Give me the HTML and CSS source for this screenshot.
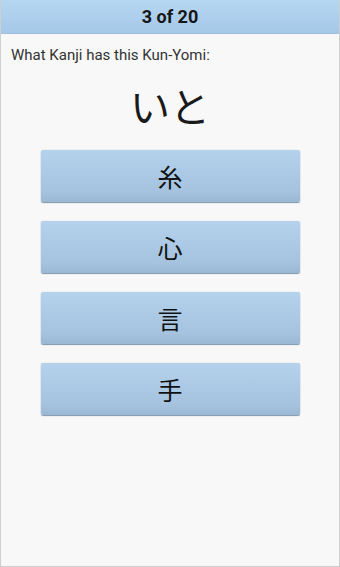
FILE: index.html
```html
<!DOCTYPE html>
<html lang="en">
  <head>
    <meta charset="UTF-8" />
    <meta name="viewport" content="width=device-width, initial-scale=1.0" />
    <title>Kanji Quiz</title>
    <link rel="stylesheet" href="styles.css">
  </head>
  <body>
    <div class="screen">
      <div class="header">3 of 20</div>
      <p class="question">What Kanji has this Kun-Yomi:</p>
      <div class="reading">いと</div>
      <div class="answers">
        <button class="answer">糸</button>
        <button class="answer">心</button>
        <button class="answer">言</button>
        <button class="answer">手</button>
      </div>
    </div>
  </body>
</html>
```

FILE: styles.css
```css
* {
    margin: 0;
    padding: 0;
    box-sizing: border-box;
}

body {
    background: #f7f7f7;
    font-family: Roboto, "Noto Sans CJK JP", sans-serif;
}

.screen {
    width: 340px;
    height: 567px;
    border: 1px solid #cfcfcf;
    border-top: none;
    background: #f8f8f8;
}

.header {
    height: 34px;
    line-height: 33px;
    text-align: center;
    font-weight: bold;
    font-size: 18px;
    color: #161616;
    background: linear-gradient(to bottom, #b6d7f1, #a5c8e8);
    border-bottom: 1px solid #9fbfdc;
}

.question {
    margin: 13px 0 0 10px;
    font-size: 15px;
    line-height: 17px;
    color: #333;
}

.reading {
    text-align: center;
    font-family: "Noto Sans CJK JP", sans-serif;
    font-size: 40px;
    line-height: 56px;
    margin-top: 13px;
    color: #1a1a1a;
}

.answers {
    display: flex;
    flex-direction: column;
    align-items: center;
    gap: 19px;
    margin-top: 17px;
}

.answer {
    width: 259px;
    height: 52px;
    border: none;
    border-radius: 2px;
    background: linear-gradient(to bottom, #b4d2ec, #a5c3df 80%, #9ab8d4);
    box-shadow: 0 1px 1px #7f96ab, 0 0 1px #9fb5c9;
    font-family: "Noto Sans CJK JP", sans-serif;
    font-size: 25px;
    color: #111;
    cursor: pointer;
}
```
